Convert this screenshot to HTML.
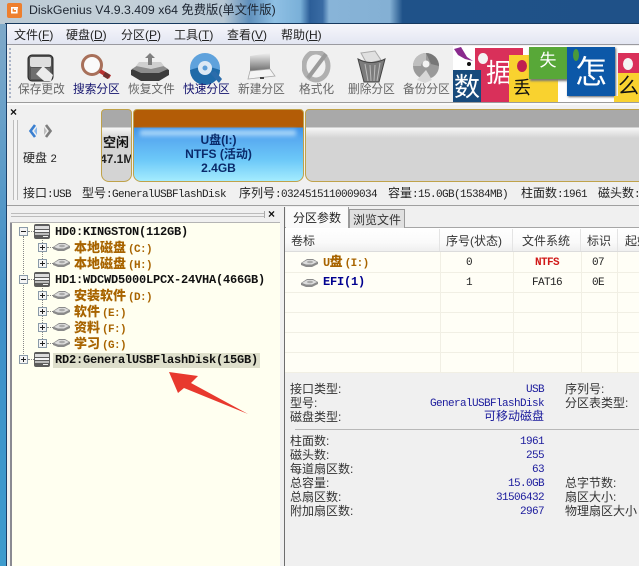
<!DOCTYPE html>
<html lang="zh"><head><meta charset="utf-8"><title>DiskGenius</title>
<style>
html,body{margin:0;padding:0}
body{width:639px;height:566px;position:relative;overflow:hidden;background:#f0f0f0;font-family:"Liberation Sans","Noto Sans CJK SC",sans-serif;font-size:12px;color:#222}
.a{position:absolute}
.t{position:absolute;white-space:nowrap;line-height:14px;height:14px}
.m{font-family:"Liberation Mono","Noto Sans CJK SC",monospace;font-size:11px;letter-spacing:-.6px}
.tb{position:absolute;white-space:nowrap;top:83px;line-height:14px;font-size:11.7px;color:#666}
.tb.on{color:#14146e}
.tr{position:absolute;white-space:nowrap;font-family:"Liberation Mono","Noto Sans CJK SC",monospace;font-weight:bold;font-size:12px;letter-spacing:-.2px;line-height:14px;color:#111;margin-top:1px}
.ch{color:#a86400;font-size:11px;letter-spacing:-.6px}
.ch b{font-size:13px;letter-spacing:0;margin-right:2px;font-family:"Liberation Sans","Noto Sans CJK SC",sans-serif}
.v{position:absolute;right:95px;white-space:nowrap;color:#1a1a9c;line-height:14px;font-family:"Liberation Mono","Noto Sans CJK SC",monospace;font-size:11px;letter-spacing:-.6px;margin-top:1px}
.l{position:absolute;white-space:nowrap;color:#333;line-height:14px;font-size:12px}
.ex{position:absolute;width:7px;height:7px;border:1px solid #8a9aa8;background:#f4f4f4}
.ex:before{content:"";position:absolute;left:1px;top:3px;width:5px;height:1px;background:#222}
.ex.p:after{content:"";position:absolute;left:3px;top:1px;width:1px;height:5px;background:#222}
.h{position:absolute;border-top:1px dotted #888;height:0}
.vl{position:absolute;border-left:1px dotted #888;width:0}
.ad{position:absolute;overflow:hidden;text-align:center}
.rl{position:absolute;left:285px;right:0;height:1px;background:#f1efe4}
.cl{position:absolute;top:252px;height:120px;width:1px;background:#f1efe4}
.hd{position:absolute;top:234px;line-height:14px;white-space:nowrap;color:#333;font-size:12px}
.hs{position:absolute;top:229px;height:22px;width:1px;background:#e4e4e4}
</style></head><body>

<!-- title bar -->
<div class="a" style="left:0;top:0;width:639px;height:24px;background:linear-gradient(90deg,#bccad4 0,#c4d0d8 20%,#b8c8d4 35%,#5f8fbb 39%,#8fc0e4 43%,#7ab0d8 47%,#2c5e98 48.5%,#3a6ca4 50.5%,#88b4d8 51.5%,#84b0d4 61%,#1f5289 63%,#1f5188 100%)"></div>
<svg class="a" style="left:7px;top:3px" width="15" height="15" viewBox="0 0 15 15"><rect x="0" y="0" width="15" height="15" rx="2" fill="#ee7f2e"/><path d="M4 4h7v1.6H5.6v3.2H9V7H7V5.8h3.6V10.5H4z" fill="#fff"/></svg>
<div class="t" style="left:29px;top:3px;font-size:12.3px;color:#1c2430">DiskGenius V4.9.3.409 x64 免费版(单文件版)</div>

<!-- left frame -->
<div class="a" style="left:0;top:24px;width:6px;height:542px;background:linear-gradient(180deg,#7fa9c9,#3f8fc8 50%,#3e9ccd)"></div>
<div class="a" style="left:5px;top:23px;width:634px;height:1px;background:#16395f"></div>
<div class="a" style="left:6px;top:24px;width:1px;height:542px;background:#1b3f68"></div>

<!-- menu -->
<div class="a" style="left:7px;top:24px;width:632px;height:20px;background:linear-gradient(180deg,#f6f6fb,#e3e6f2)"></div>
<div class="a" style="left:7px;top:44px;width:632px;height:1px;background:#9a9aa0"></div>
<div class="t" style="left:14px;top:28px;font-size:12px">文件(<u>F</u>)</div>
<div class="t" style="left:66px;top:28px;font-size:12px">硬盘(<u>D</u>)</div>
<div class="t" style="left:121px;top:28px;font-size:12px">分区(<u>P</u>)</div>
<div class="t" style="left:174px;top:28px;font-size:12px">工具(<u>T</u>)</div>
<div class="t" style="left:227px;top:28px;font-size:12px">查看(<u>V</u>)</div>
<div class="t" style="left:281px;top:28px;font-size:12px">帮助(<u>H</u>)</div>

<!-- toolbar -->
<div class="a" style="left:7px;top:45px;width:632px;height:57px;background:#f0f0f0"></div>
<div class="a" style="left:9px;top:48px;width:2px;height:52px;background:repeating-linear-gradient(180deg,#aab4c8 0 2px,transparent 2px 4px)"></div>
<div class="a" style="left:7px;top:102px;width:632px;height:1px;background:#9c9c9c"></div>

<!-- save -->
<svg class="a" style="left:27px;top:54px" width="28" height="28" viewBox="0 0 28 28"><rect x="1" y="1" width="25" height="26" rx="4" fill="#555" stroke="#222"/><rect x="3" y="3" width="21" height="10" rx="2" fill="#dedede"/><path d="M4 14 H23 V25 H4z" fill="#6e6e6e"/><path d="M9 20 L16 12 L26 21 L24 27 L17 27z" fill="#ececec"/></svg>
<!-- search -->
<svg class="a" style="left:79px;top:53px" width="34" height="26" viewBox="0 0 34 26"><circle cx="13" cy="12" r="9.5" fill="#fafafa" stroke="#a8705a" stroke-width="3"/><path d="M21 18 L31 24" stroke="#b83030" stroke-width="4"/><path d="M25 21 L30 24" stroke="#703030" stroke-width="5"/></svg>
<!-- restore -->
<svg class="a" style="left:131px;top:53px" width="38" height="29" viewBox="0 0 38 29"><path d="M0 17 L8 12 H30 L38 17 V22 L28 28 H10 L0 22z" fill="#3c3c3c"/><path d="M1 16 L10 10 H28 L37 16 L28 20 H10z" fill="#8c8c8c"/><path d="M8 9 H30 L33 13 L20 16 L5 13z" fill="#cfcfcf"/><path d="M19 0 L24 5 H21 V12 H17 V5 H14z" fill="#7f7f7f"/></svg>
<!-- quick -->
<svg class="a" style="left:190px;top:53px" width="32" height="32" viewBox="0 0 32 32"><circle cx="15" cy="15" r="15" fill="#5fa2dc"/><path d="M0 17 Q15 11 30 17 A15 15 0 0 1 0 17z" fill="#1f6aa8"/><circle cx="15" cy="15" r="7" fill="#dce8f4"/><circle cx="15" cy="15" r="2.5" fill="#5b9dd8"/><path d="M20 20 L29 30 L32 26 L25 18z" fill="#2b6cab"/></svg>
<!-- new -->
<svg class="a" style="left:246px;top:52px" width="30" height="28" viewBox="0 0 30 28"><defs><linearGradient id="sc" x1="0" y1="0" x2="0" y2="1"><stop offset="0" stop-color="#f0f0f0"/><stop offset="1" stop-color="#6e6e6e"/></linearGradient></defs><path d="M4 4 L24 1 V17 L4 19z" fill="url(#sc)"/><path d="M4 19 L24 17 L29 24 L2 27z" fill="#f4f4f4" stroke="#aaa" stroke-width=".8"/><rect x="14" y="25" width="4" height="2" fill="#444"/></svg>
<!-- format -->
<svg class="a" style="left:302px;top:51px" width="30" height="32" viewBox="0 0 30 32"><ellipse cx="14" cy="15" rx="12" ry="14" fill="none" stroke="#b0b0b0" stroke-width="5"/><path d="M6 27 L24 3" stroke="#9a9a9a" stroke-width="4"/></svg>
<!-- delete -->
<svg class="a" style="left:357px;top:50px" width="30" height="34" viewBox="0 0 30 34"><path d="M4 3 L18 1 L24 10 L10 14z" fill="#e0e0e0" stroke="#aaa"/><path d="M1 9 Q14 16 28 9 L22 32 H7z" fill="#7c7c7c" stroke="#444"/><path d="M8 14 L11 31 M13 15 L14 31 M18 15 L17 31 M23 13 L20 31" stroke="#bbb"/></svg>
<!-- backup -->
<svg class="a" style="left:411px;top:52px" width="30" height="32" viewBox="0 0 30 32"><circle cx="15" cy="14" r="13" fill="#9a9a9a"/><path d="M2 14 A13 13 0 0 1 15 1 L15 9 A5 5 0 0 0 10 14z" fill="#bfbfbf"/><path d="M15 1 A13 13 0 0 1 28 14 L20 12z" fill="#777"/><circle cx="15" cy="12" r="3.5" fill="#f4f4f4"/><path d="M15 18 L6 28 L14 31 L21 28z" fill="#d8d8d8"/></svg>

<div class="tb" style="left:18px">保存更改</div>
<div class="tb on" style="left:73px">搜索分区</div>
<div class="tb" style="left:128px">恢复文件</div>
<div class="tb on" style="left:183px">快速分区</div>
<div class="tb" style="left:238px">新建分区</div>
<div class="tb" style="left:299px">格式化</div>
<div class="tb" style="left:348px">删除分区</div>
<div class="tb" style="left:403px">备份分区</div>

<!-- ad banner -->
<div class="a" style="left:453px;top:46px;width:186px;height:56px;background:#fff;overflow:hidden">
 <svg class="a" style="left:0;top:1px" width="22" height="22" viewBox="0 0 22 22"><path d="M1 2 L8 0 L14 10 L20 14 L12 12 L5 8z" fill="#8a2a8e"/><circle cx="16" cy="17" r="2" fill="#111"/></svg>
 <div class="ad" style="left:22px;top:2px;width:48px;height:54px;background:#d9305a;color:#fff;font-size:26px;line-height:50px">据</div>
 <div class="a" style="left:25px;top:7px;width:10px;height:11px;border-radius:50%;background:#f4f4f4"></div>
 <div class="ad" style="left:0;top:24px;width:28px;height:32px;background:#174a7c;color:#fff;font-size:26px;line-height:34px">数</div>
 <div class="ad" style="left:56px;top:9px;width:49px;height:47px;background:#f9d22f;color:#111;font-size:18px;line-height:66px;text-align:left;text-indent:4px">丢</div>
 <div class="a" style="left:64px;top:14px;width:10px;height:12px;border-radius:50%;background:#c02050"></div>
 <div class="ad" style="left:76px;top:1px;width:38px;height:32px;background:#58a838;color:#fff;font-size:17px;line-height:28px;box-shadow:1px 2px 2px #777">失</div>
 <div class="ad" style="left:114px;top:1px;width:48px;height:49px;background:#0c58a8;color:#fff;font-size:32px;line-height:50px;box-shadow:1px 1px 2px #666">怎</div>
 <div class="a" style="left:120px;top:3px;width:6px;height:12px;border-radius:50%;background:#4a9a3a"></div>
 <div class="a" style="left:161px;top:50px;width:60px;height:6px;background:#f9d22f"></div>
 <div class="a" style="left:165px;top:7px;width:21px;height:20px;background:#d9305a"></div>
 <div class="a" style="left:170px;top:12px;width:10px;height:12px;border-radius:50%;background:#f4f4f4"></div>
 <div class="ad" style="left:165px;top:27px;width:21px;height:29px;background:#f9d22f;color:#111;font-size:21px;line-height:28px;text-align:left">么</div>
</div>

<!-- disk map panel -->
<div class="a" style="left:7px;top:103px;width:632px;height:2px;background:#fafafa"></div>
<div class="a" style="left:7px;top:105px;width:632px;height:100px;background:#f0f0f0"></div>
<div class="t" style="left:10px;top:105px;font-weight:bold;font-size:12px;color:#111">×</div>
<div class="a" style="left:13px;top:120px;width:3px;height:80px;border:1px solid #bcbcbc;border-width:0 1px;background:#f4f4f4"></div>
<svg class="a" style="left:28px;top:124px" width="26" height="14" viewBox="0 0 26 14"><path d="M7 1 L2.5 7 L7 13" fill="none" stroke="#3a7fd0" stroke-width="2.6"/><path d="M9 3 L6 7 L9 11z" fill="#8ab8ea"/><path d="M18 1 L22.5 7 L18 13" fill="none" stroke="#7e7e7e" stroke-width="2.6"/><path d="M16 3 L19 7 L16 11z" fill="#bdbdbd"/></svg>
<div class="t" style="left:23px;top:151px;color:#222;font-size:12px">硬盘 <span class="m">2</span></div>

<!-- free seg -->
<div class="a" style="left:101px;top:109px;width:29px;height:71px;border:1px solid #bfa24a;border-radius:4px 4px 8px 8px;background:linear-gradient(180deg,#a9a9a9 0,#a9a9a9 17px,#f6f6f6 18px,#d4d4d4 28px,#d4d4d4 100%);overflow:hidden">
 <div class="t" style="left:1px;top:25px;font-weight:bold;font-size:13px;color:#111;line-height:15px">空闲</div>
 <div class="t" style="left:-2px;top:42px;font-weight:bold;font-size:12px;color:#222;line-height:14px">47.1M</div>
</div>
<!-- U seg -->
<div class="a" style="left:133px;top:109px;width:169px;height:71px;border:1px solid #bfa24a;border-radius:4px 4px 8px 8px;background:linear-gradient(180deg,#b35c06 0,#b35c06 17px,#3f94ea 18px,#58aaf0 40%,#6cc8f8 70%,#a4ecfe 100%);overflow:hidden">
 <div class="a" style="left:6px;top:20px;width:156px;height:6px;background:#a6d4f8;filter:blur(2px)"></div>
 <div class="t" style="left:0;width:169px;text-align:center;top:23px;font-weight:bold;font-size:12px;color:#0a2a6a">U盘(I:)</div>
 <div class="t" style="left:0;width:169px;text-align:center;top:37px;font-weight:bold;font-size:12px;color:#0a2a6a">NTFS (活动)</div>
 <div class="t" style="left:0;width:169px;text-align:center;top:51px;font-weight:bold;font-size:12px;color:#0a2a6a">2.4GB</div>
</div>
<!-- rest seg -->
<div class="a" style="left:305px;top:109px;width:340px;height:71px;border:1px solid #bfa24a;border-radius:4px 0 0 8px;background:linear-gradient(180deg,#a9a9a9 0,#a9a9a9 17px,#f6f6f6 18px,#d4d4d4 28px,#d4d4d4 100%)"></div>

<!-- status line -->
<div class="t" style="left:23px;top:186px">接口<span class="m">:USB</span></div>
<div class="t" style="left:82px;top:186px">型号<span class="m">:GeneralUSBFlashDisk</span></div>
<div class="t" style="left:239px;top:186px">序列号<span class="m">:0324515110009034</span></div>
<div class="t" style="left:388px;top:186px">容量<span class="m">:15.0GB(15384MB)</span></div>
<div class="t" style="left:521px;top:186px">柱面数<span class="m">:1961</span></div>
<div class="t" style="left:598px;top:186px">磁头数<span class="m">:</span></div>
<div class="a" style="left:7px;top:205px;width:632px;height:1px;background:#a0a0a0"></div>

<!-- left pane header -->
<div class="a" style="left:11px;top:213px;width:253px;height:2px;border:1px solid #bcbcbc;border-width:1px 0"></div>
<div class="a" style="left:264px;top:211px;width:1px;height:7px;background:#aaa"></div>
<div class="t" style="left:268px;top:207px;font-weight:bold;font-size:12px;color:#111">×</div>

<!-- tree pane -->
<div class="a" style="left:10px;top:223px;width:2px;height:343px;background:#8a8a92"></div>
<div class="a" style="left:10px;top:222px;width:270px;height:1px;background:#b4b4b4"></div>
<div class="a" style="left:12px;top:223px;width:268px;height:343px;background:#fffff0"></div>

<div class="vl" style="left:23px;top:236px;height:120px"></div>
<div class="vl" style="left:42px;top:236px;height:27px"></div>
<div class="vl" style="left:42px;top:284px;height:59px"></div>

<div class="a" style="left:53px;top:353px;width:207px;height:15px;background:#dedfcb"></div>

<span class="ex" style="left:19px;top:227px"></span>
<span class="ex" style="left:19px;top:275px"></span>
<span class="ex p" style="left:19px;top:355px"></span>
<span class="ex p" style="left:38px;top:243px"></span>
<span class="ex p" style="left:38px;top:259px"></span>
<span class="ex p" style="left:38px;top:291px"></span>
<span class="ex p" style="left:38px;top:307px"></span>
<span class="ex p" style="left:38px;top:323px"></span>
<span class="ex p" style="left:38px;top:339px"></span>
<div class="h" style="left:28px;top:231px;width:6px"></div>
<div class="h" style="left:28px;top:279px;width:6px"></div>
<div class="h" style="left:28px;top:359px;width:6px"></div>
<div class="h" style="left:47px;top:247px;width:6px"></div>
<div class="h" style="left:47px;top:263px;width:6px"></div>
<div class="h" style="left:47px;top:295px;width:6px"></div>
<div class="h" style="left:47px;top:311px;width:6px"></div>
<div class="h" style="left:47px;top:327px;width:6px"></div>
<div class="h" style="left:47px;top:343px;width:6px"></div>

<svg width="0" height="0" style="position:absolute"><defs>
<g id="dk"><rect x="0" y="0" width="16" height="15" rx="2" fill="#5c5c5c"/><rect x="1" y="2" width="14" height="3" fill="#dcdcdc"/><rect x="1" y="6" width="14" height="2" fill="#f4f4f4"/><rect x="1" y="9" width="14" height="2" fill="#bcbcbc"/><rect x="9" y="12" width="5" height="1" fill="#eee"/></g>
<g id="hd"><path d="M0 5 L6 1 H12 L17 4 V6 L11 9 H5 L0 7z" fill="#8a8a8a"/><path d="M1 5 L6 2 H12 L16 4 L11 6.5 H5z" fill="#dcdcdc"/><ellipse cx="9" cy="4" rx="3" ry="1.3" fill="#aaa"/></g>
</defs></svg>
<svg class="a" style="left:34px;top:224px" width="16" height="15"><use href="#dk"/></svg>
<svg class="a" style="left:34px;top:272px" width="16" height="15"><use href="#dk"/></svg>
<svg class="a" style="left:34px;top:352px" width="16" height="15"><use href="#dk"/></svg>
<svg class="a" style="left:53px;top:242px" width="17" height="10"><use href="#hd"/></svg>
<svg class="a" style="left:53px;top:258px" width="17" height="10"><use href="#hd"/></svg>
<svg class="a" style="left:53px;top:290px" width="17" height="10"><use href="#hd"/></svg>
<svg class="a" style="left:53px;top:306px" width="17" height="10"><use href="#hd"/></svg>
<svg class="a" style="left:53px;top:322px" width="17" height="10"><use href="#hd"/></svg>
<svg class="a" style="left:53px;top:338px" width="17" height="10"><use href="#hd"/></svg>

<div class="tr" style="left:55px;top:224px">HD0:KINGSTON(112GB)</div>
<div class="tr" style="left:55px;top:272px">HD1:WDCWD5000LPCX-24VHA(466GB)</div>
<div class="tr" style="left:55px;top:352px">RD2:GeneralUSBFlashDisk(15GB)</div>
<div class="tr ch" style="left:74px;top:240px"><b>本地磁盘</b>(C:)</div>
<div class="tr ch" style="left:74px;top:256px"><b>本地磁盘</b>(H:)</div>
<div class="tr ch" style="left:74px;top:288px"><b>安装软件</b>(D:)</div>
<div class="tr ch" style="left:74px;top:304px"><b>软件</b>(E:)</div>
<div class="tr ch" style="left:74px;top:320px"><b>资料</b>(F:)</div>
<div class="tr ch" style="left:74px;top:336px"><b>学习</b>(G:)</div>

<svg class="a" style="left:160px;top:362px" width="95" height="60" viewBox="0 0 95 60"><polygon points="9,10 38,14 31,21 88,52 24,26 18,31" fill="#e8392e"/></svg>

<!-- right pane -->
<div class="a" style="left:280px;top:206px;width:4px;height:360px;background:#f0f0f0"></div>
<div class="a" style="left:284px;top:207px;width:1px;height:359px;background:#6e6e6e"></div>
<div class="a" style="left:285px;top:207px;width:354px;height:21px;background:#f0f0f0"></div>
<div class="a" style="left:285px;top:227px;width:354px;height:1px;background:#a6a6a6"></div>
<div class="a" style="left:286px;top:207px;width:62px;height:21px;background:#fafafa;border-right:1px solid #9a9a9a"></div>
<div class="a" style="left:349px;top:209px;width:54px;height:18px;background:#e0e0e0;border:1px solid #9a9a9a;border-bottom:0"></div>
<div class="t" style="left:293px;top:211px">分区参数</div>
<div class="t" style="left:353px;top:213px;color:#333">浏览文件</div>

<div class="a" style="left:285px;top:228px;width:354px;height:24px;background:linear-gradient(180deg,#fff,#fafafa 60%,#eeeeee)"></div>
<div class="a" style="left:285px;top:251px;width:354px;height:1px;background:#dcdcdc"></div>
<div class="hs" style="left:439px"></div><div class="hs" style="left:512px"></div><div class="hs" style="left:580px"></div><div class="hs" style="left:617px"></div>
<div class="hd" style="left:291px">卷标</div>
<div class="hd" style="left:446px">序号(状态)</div>
<div class="hd" style="left:522px">文件系统</div>
<div class="hd" style="left:587px">标识</div>
<div class="hd" style="left:625px">起始</div>

<div class="a" style="left:285px;top:252px;width:354px;height:120px;background:#fffef6"></div>
<div class="rl" style="top:272px"></div><div class="rl" style="top:292px"></div><div class="rl" style="top:312px"></div><div class="rl" style="top:332px"></div><div class="rl" style="top:352px"></div><div class="rl" style="top:372px"></div>
<div class="cl" style="left:440px"></div><div class="cl" style="left:513px"></div><div class="cl" style="left:581px"></div><div class="cl" style="left:617px"></div>

<svg class="a" style="left:301px;top:258px" width="17" height="10"><use href="#hd"/></svg>
<svg class="a" style="left:301px;top:278px" width="17" height="10"><use href="#hd"/></svg>
<div class="tr ch" style="left:323px;top:254px"><span style="font-size:12px">U</span><b>盘</b>(I:)</div>
<div class="tr" style="left:323px;top:274px;color:#000090">EFI(1)</div>
<div class="t m" style="left:466px;top:256px">0</div>
<div class="t m" style="left:466px;top:276px">1</div>
<div class="t m" style="left:535px;top:256px;color:#d01818;font-weight:bold">NTFS</div>
<div class="t m" style="left:532px;top:276px">FAT16</div>
<div class="t m" style="left:592px;top:256px">07</div>
<div class="t m" style="left:592px;top:276px">0E</div>

<!-- details -->
<div class="a" style="left:285px;top:373px;width:354px;height:193px;background:#f0f0f0"></div>
<div class="l" style="left:290px;top:382px">接口类型:</div>
<div class="l" style="left:290px;top:396px">型号:</div>
<div class="l" style="left:290px;top:410px">磁盘类型:</div>
<div class="v" style="top:382px">USB</div>
<div class="v" style="top:396px">GeneralUSBFlashDisk</div>
<div class="v" style="top:409px;font-size:12px;letter-spacing:0">可移动磁盘</div>
<div class="l" style="left:565px;top:382px">序列号:</div>
<div class="l" style="left:565px;top:396px">分区表类型:</div>
<div class="a" style="left:295px;top:429px;width:344px;height:1px;background:#b8b8b8"></div>
<div class="l" style="left:290px;top:434px">柱面数:</div>
<div class="l" style="left:290px;top:448px">磁头数:</div>
<div class="l" style="left:290px;top:462px">每道扇区数:</div>
<div class="l" style="left:290px;top:476px">总容量:</div>
<div class="l" style="left:290px;top:490px">总扇区数:</div>
<div class="l" style="left:290px;top:504px">附加扇区数:</div>
<div class="v" style="top:434px">1961</div>
<div class="v" style="top:448px">255</div>
<div class="v" style="top:462px">63</div>
<div class="v" style="top:476px">15.0GB</div>
<div class="v" style="top:490px">31506432</div>
<div class="v" style="top:504px">2967</div>
<div class="l" style="left:565px;top:476px">总字节数:</div>
<div class="l" style="left:565px;top:490px">扇区大小:</div>
<div class="l" style="left:565px;top:504px">物理扇区大小</div>

</body></html>
